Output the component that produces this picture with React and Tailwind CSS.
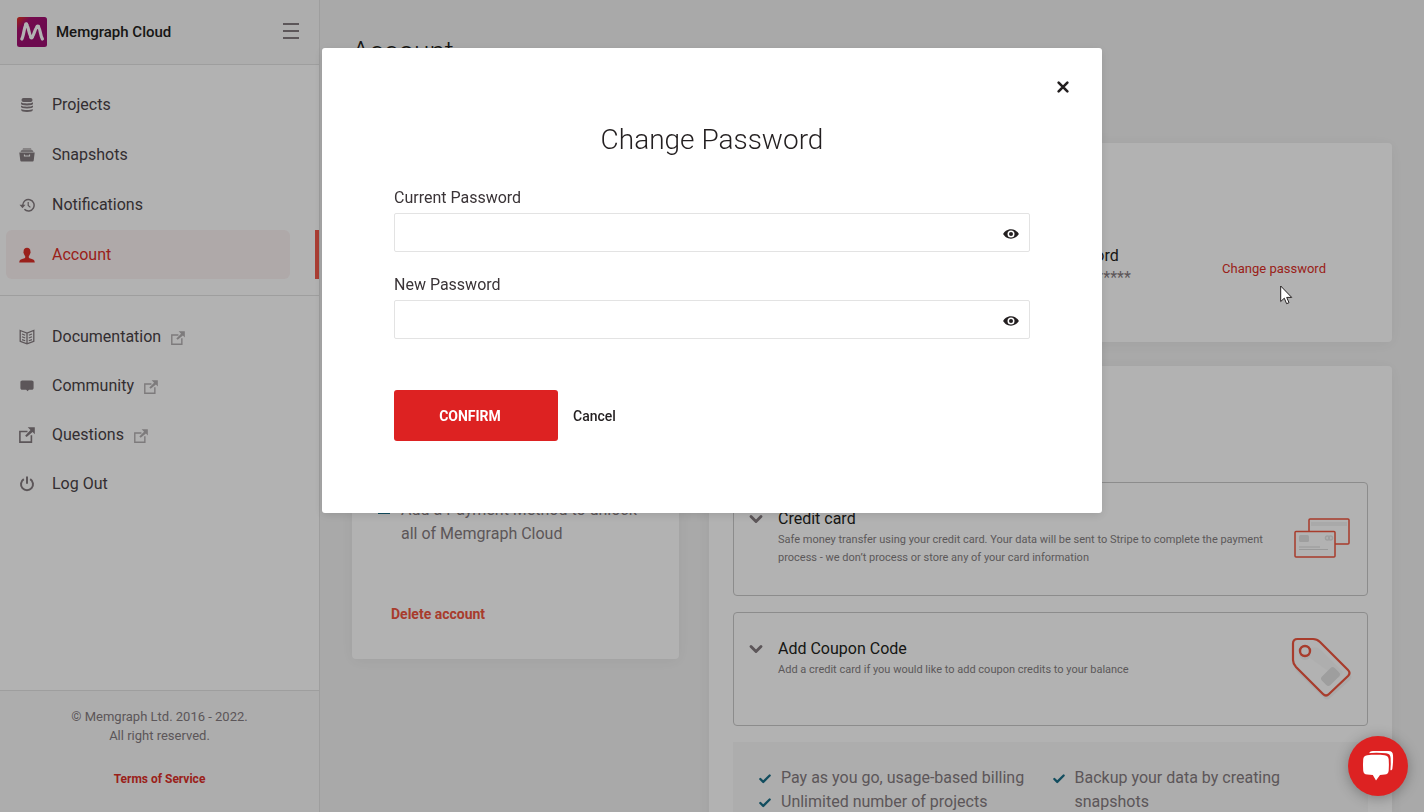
import React, { useState } from "react";
import { ChevronDown, Check } from "lucide-react";

const Icon = ({ children, size = 16, className = "" }) => (
  <svg
    width={size}
    height={size}
    viewBox="0 0 16 16"
    fill="currentColor"
    aria-hidden="true"
    className={className}
  >
    {children}
  </svg>
);

const ProjectsIcon = () => (
  <Icon>
    <rect x="2.500" y="1" width="11" height="4" rx="2" />
    <path d="M2 5.200c1 .8 3.400 1.200 6 1.200s5-.4 6-1.200v1.600c0 1-2.200 1.700-6 1.700s-6-.7-6-1.700z" />
    <path d="M2 8.600c1 .8 3.400 1.200 6 1.200s5-.4 6-1.200v1.200c0 1-2.200 1.700-6 1.700s-6-.7-6-1.700z" />
    <path d="M2.300 11.900c1 .7 3.200 1.100 5.700 1.100s4.700-.4 5.700-1.100v1.300c0 1-2.200 1.700-5.700 1.700s-5.700-.7-5.700-1.700z" />
  </Icon>
);

const SnapshotsIcon = () => (
  <Icon>
    <path d="M4 1.500h8l.6 1H3.400zM2.600 3.200h10.800l1.200 1.500H1.400z" />
    <path
      fillRule="evenodd"
      d="M.3 5.400h15.400l-1 8.200c-.1.600-.4.900-1 .9H2.300c-.6 0-.9-.3-1-.9zM4.900 7.400v2.200h6.200V7.400H10v1.100H6V7.400z"
    />
  </Icon>
);

const NotificationsIcon = () => (
  <Icon>
    <path
      d="M3.700 8.300A5.700 5.700 0 1 1 5.400 12.300"
      fill="none"
      stroke="currentColor"
      strokeWidth="1.500"
    />
    <path d="M.5 7.800h6l-3 3.400z" />
    <path
      d="M9.200 5v3.400l2.200 2"
      fill="none"
      stroke="currentColor"
      strokeWidth="1.200"
    />
  </Icon>
);

const AccountIcon = () => (
  <Icon>
    <path d="M8 .8c2.300 0 3.500 1.500 3.400 3.700.4.700.2 1.700-.3 2.200-.3 1.200-.8 2-1.300 2.500v1.300c.2.700 1 .9 2.300 1.300 2 .6 3.500 1 3.700 3.700H.2c.2-2.700 1.700-3.100 3.700-3.700 1.300-.4 2.100-.6 2.300-1.300V9.200c-.5-.5-1-1.300-1.300-2.500-.5-.5-.7-1.500-.3-2.200C4.500 2.300 5.700.8 8 .8z" />
  </Icon>
);

const DocumentationIcon = () => (
  <Icon>
    <path
      d="M1.200 1.500 8 4l6.800-2.500v10.800L8 14.800l-6.800-2.500zM8 4v10.800"
      fill="none"
      stroke="currentColor"
      strokeWidth="1.300"
    />
    <path
      d="M3 5l3.200 1.200M3 7.800 6.200 9M3 10.600l3.200 1.200M13 5 9.800 6.200M13 7.800 9.800 9M13 10.600l-3.200 1.200"
      fill="none"
      stroke="currentColor"
      strokeWidth="1.200"
    />
  </Icon>
);

const CommunityIcon = () => (
  <Icon>
    <path d="M3.300 2.500h9.400c1.200 0 1.900.7 1.900 1.800v5.600c0 1.200-.7 1.800-1.900 1.800H10L8.500 13.300l-1.300-1.600H3.300c-1.200 0-1.900-.6-1.900-1.800V4.300c0-1.100.7-1.800 1.900-1.800z" />
  </Icon>
);

const ExternalIcon = ({ size, className }) => (
  <Icon size={size} className={className}>
    <path
      d="M8.500 4.500H.9v10.600h11.500V8.200"
      fill="none"
      stroke="currentColor"
      strokeWidth="1.600"
    />
    <path d="M8.700.2h7.100v7.100l-2.200-2.200-6 5-1.500-1.400 5.400-5.700z" />
  </Icon>
);

const LogOutIcon = () => (
  <Icon>
    <path
      d="M4.800 3.200a6 6 0 1 0 6.400 0"
      fill="none"
      stroke="currentColor"
      strokeWidth="2"
    />
    <path d="M7 .5h2v7.300H7z" />
  </Icon>
);

const EyeIcon = () => (
  <Icon>
    <path
      fillRule="evenodd"
      d="M8 3.300c4 0 6.700 2.600 7.900 4.700-1.200 2.100-3.900 4.700-7.900 4.700S1.300 10.100.1 8C1.300 5.900 4 3.300 8 3.300zM8 4.500a3.500 3.500 0 1 0 0 7 3.500 3.500 0 0 0 0-7z"
    />
    <circle cx="8" cy="8" r="2" />
  </Icon>
);

const Logo = () => (
  <svg width="30" height="30" viewBox="0 0 30 30" aria-hidden="true">
    <defs>
      <linearGradient id="logo" x1="0" y1="0" x2="0.6" y2="0.6">
        <stop offset="0" stopColor="#e5361b" />
        <stop offset="0.400" stopColor="#a8106f" />
        <stop offset="1" stopColor="#9c0f72" />
      </linearGradient>
    </defs>
    <rect width="30" height="30" rx="2.500" fill="url(#logo)" />
    <path
      d="M4.800 22C6.800 19 7.500 7.200 9.300 7.200c1.900 0 3 13.300 5.200 13.300 2.200 0 3.700-11 6.200-11 2.600 0 2.300 9 4.700 12.500"
      fill="none"
      stroke="#fff"
      strokeWidth="3.200"
      strokeLinecap="round"
      strokeLinejoin="round"
    />
    <circle cx="9.200" cy="7.300" r="2.100" fill="#fff" />
    <circle cx="20.800" cy="9.800" r="2.400" fill="#fff" />
    <circle cx="14.500" cy="20.300" r="2.200" fill="#fff" />
  </svg>
);

const CardsDrawing = () => (
  <svg width="60" height="44" viewBox="0 0 60 44" aria-hidden="true">
    <rect x="16" y="2" width="40" height="25" rx="1" fill="#fff" stroke="#f1563f" strokeWidth="1.500" />
    <path d="M18 5h36v4H18z" fill="#f2f2f2" />
    <rect x="2" y="14.500" width="40" height="25.500" rx="1" fill="#fff" stroke="#f1563f" strokeWidth="1.500" />
    <rect x="6" y="18" width="10" height="7" rx="1.500" fill="#e3e3e3" />
    <circle cx="34.500" cy="21" r="2" fill="none" stroke="#e3e3e3" strokeWidth="1.500" />
    <circle cx="37.500" cy="21" r="2" fill="none" stroke="#e3e3e3" strokeWidth="1.500" />
    <path d="M6 30h21" stroke="#ececec" strokeWidth="2" />
    <path d="M6 32.500h29" stroke="#dcdcdc" strokeWidth="1" />
  </svg>
);

const TagDrawing = () => (
  <svg width="62" height="66" viewBox="0 0 62 66" aria-hidden="true">
    <path
      d="M8 8h18c3 0 5 1 7 3l26 27c2 2 2 4 0 6L39 62c-2 2-4 2-6 0L7 37c-2-2-3-4-3-7V13z"
      fill="#f5f5f5"
    />
    <path
      d="M6.500 3H22c3 0 5 1 7 3l28 28c2 2 2 4 0 6L38 58c-2 2-4 2-6 0L5 31c-1.800-2-3-4-3-7V7.500C2 4.500 3.500 3 6.500 3z"
      fill="#fff"
      stroke="#f1563f"
      strokeWidth="2.200"
    />
    <path d="M19 12c6-2 9 0 12 3l21 21c-1 2-3 5-5 6L19 22z" fill="#fafafa" />
    <circle cx="14" cy="18.500" r="5.500" fill="#f4f4f4" />
    <rect x="30.500" y="34.500" width="18" height="12" rx="3" fill="#e3e3e3" transform="rotate(-45 39.500 40.500)" />
    <circle cx="14" cy="15" r="5" fill="#fff" stroke="#f1563f" strokeWidth="2.400" />
  </svg>
);

const mainLinks = [
  { label: "Projects", icon: ProjectsIcon },
  { label: "Snapshots", icon: SnapshotsIcon },
  { label: "Notifications", icon: NotificationsIcon },
  { label: "Account", icon: AccountIcon, active: true },
];

const helpLinks = [
  { label: "Documentation", icon: DocumentationIcon, external: true },
  { label: "Community", icon: CommunityIcon, external: true },
  { label: "Questions", icon: ExternalIcon, external: true },
  { label: "Log Out", icon: LogOutIcon },
];

const paymentMethods = [
  {
    title: "Credit card",
    text: "Safe money transfer using your credit card. Your data will be sent to Stripe to complete the payment process - we don’t process or store any of your card information",
    drawing: CardsDrawing,
  },
  {
    title: "Add Coupon Code",
    text: "Add a credit card if you would like to add coupon credits to your balance",
    drawing: TagDrawing,
  },
];

const benefits = [
  ["Pay as you go, usage-based billing", "Unlimited number of projects"],
  ["Backup your data by creating snapshots"],
];

const NavItem = ({ label, icon: ItemIcon, active, external }) => (
  <li className="flex justify-between">
    <a
      href="#"
      className={
        active
          ? "ml-1.5 mr-[25px] flex h-[49px] grow items-center rounded-md bg-[#fbf2f2] pl-[13px] text-[#dd2f28]"
          : "ml-1.5 mr-[29px] flex h-[49px] grow items-center rounded-md pl-[13px] text-[#4a4347]"
      }
    >
      <span className={active ? "mr-[17px] text-[#dd2f28]" : "mr-[17px] text-[#857c80]"}>
        <ItemIcon />
      </span>
      {label}
      {external && (
        <ExternalIcon size={14} className="ml-2.5 mt-0.5 text-[#b4b0b2]" />
      )}
    </a>
    {active && <span className="w-1 bg-[#f4594a]" />}
  </li>
);

const Sidebar = () => (
  <aside className="flex w-80 shrink-0 flex-col border-r border-[#e3e3e3] bg-white">
    <div className="flex h-[65px] items-center border-b border-[#e3e3e3] bg-[#f8f8f8] pl-[17px] pr-5">
      <Logo />
      <span className="ml-[9px] text-[15px] font-medium text-[#231f20]">
        Memgraph Cloud
      </span>
      <button
        type="button"
        aria-label="Toggle menu"
        className="mb-0.5 ml-auto flex w-4 flex-col gap-[5px]"
      >
        <span className="h-0.5 bg-[#857c80]" />
        <span className="h-0.5 bg-[#857c80]" />
        <span className="h-0.5 bg-[#857c80]" />
      </button>
    </div>

    <nav className="text-base">
      <ul className="flex flex-col gap-px border-b border-[#e3e3e3] pb-4 pt-[15px]">
        {mainLinks.map((item) => (
          <NavItem key={item.label} {...item} />
        ))}
      </ul>
      <ul className="pt-4">
        {helpLinks.map((item) => (
          <NavItem key={item.label} {...item} />
        ))}
      </ul>
    </nav>

    <footer className="mt-auto h-[122px] border-t border-[#e3e3e3] bg-[#f8f8f8] pt-4 text-center text-[13px] leading-[19px] text-[#857c80]">
      <p>© Memgraph Ltd. 2016 - 2022.</p>
      <p>All right reserved.</p>
      <a
        href="#"
        className="mt-6 inline-block text-xs font-bold leading-5 text-[#dd2f28]"
      >
        Terms of Service
      </a>
    </footer>
  </aside>
);

const PaymentMethod = ({ title, text, drawing: Drawing }) => (
  <section className="flex h-[114px] rounded-sm border border-[#c9c9c9] pl-4 pr-3.5 pt-6">
    <button
      type="button"
      aria-label={`Expand ${title}`}
      className="mr-4 flex h-6 w-3 items-center justify-center text-[#857c80]"
    >
      <ChevronDown size={20} strokeWidth={3.5} className="shrink-0" />
    </button>
    <div className="w-[500px]">
      <h3 className="text-base text-[#231f20]">{title}</h3>
      <p className="text-[11px] leading-[18px] text-[#857f82]">{text}</p>
    </div>
    <div className="ml-auto flex h-16 items-center">
      <Drawing />
    </div>
  </section>
);

const AccountPage = ({ onChangePassword }) => (
  <main className="grow px-8 pt-8">
    <h1 className="text-[28px] font-light leading-10 text-[#231f20]">
      Account
    </h1>

    <section className="mt-[71px] flex h-[199px] items-start justify-end rounded bg-white pr-[66px] pt-[101px] shadow-[0_2px_16px_rgba(0,0,0,0.06)]">
      <div className="w-[174px]">
        <h2 className="text-base text-[#231f20]">Password</h2>
        <p className="text-base leading-5 text-[#857c80]">************</p>
      </div>
      <button
        type="button"
        onClick={onChangePassword}
        className="mt-[15px] text-[13px] leading-5 text-[#dd2f28]"
      >
        Change password
      </button>
    </section>

    <div className="mt-6 flex items-start gap-[30px]">
      <section className="w-[327px] shrink-0 rounded bg-white px-6 pb-[33px] pt-[132px] shadow-[0_2px_16px_rgba(0,0,0,0.06)]">
        <div className="flex">
          <Icon size={16} className="mr-[9px] mt-px shrink-0 text-[#1b6f88]">
            <path
              d="M2.750 2.750h10.500v11.500H2.750z"
              fill="none"
              stroke="currentColor"
              strokeWidth="1.500"
            />
          </Icon>
          <p className="text-base text-[#857c80]">
            Add a Payment Method to unlock all of Memgraph Cloud
          </p>
        </div>
        <button
          type="button"
          className="ml-[15px] mt-14 block text-sm font-bold leading-6 text-[#f1563f]"
        >
          Delete account
        </button>
      </section>

      <section className="grow rounded bg-white px-6 pb-8 pt-[116px] shadow-[0_2px_16px_rgba(0,0,0,0.06)]">
        <div className="flex flex-col gap-4">
          {paymentMethods.map((method) => (
            <PaymentMethod key={method.title} {...method} />
          ))}
          <div className="grid grid-cols-2 bg-[#f8f8f8] p-6">
            {benefits.map((column) => (
              <ul key={column[0]} className="text-base text-[#857c80]">
                {column.map((benefit) => (
                  <li key={benefit} className="flex">
                    <Check
                      size={14}
                      strokeWidth={4}
                      className="ml-px mr-[9px] mt-1.5 shrink-0 text-[#1b6f88]"
                    />
                    {benefit}
                  </li>
                ))}
              </ul>
            ))}
          </div>
        </div>
      </section>
    </div>
  </main>
);

const PasswordField = ({ id, label, className }) => {
  const [visible, setVisible] = useState(false);

  return (
    <div className={className}>
      <label htmlFor={id} className="block text-base text-[#3a3437]">
        {label}
      </label>
      <div className="mt-[3px] flex h-[39px] items-center rounded-xs border border-[#e3e3e3] pr-2.5">
        <input
          id={id}
          type={visible ? "text" : "password"}
          className="h-full grow px-3 text-base outline-none"
        />
        <button
          type="button"
          aria-label="Show password"
          onClick={() => setVisible(!visible)}
          className="mt-[3px] text-[#231f20]"
        >
          <EyeIcon />
        </button>
      </div>
    </div>
  );
};

const ChangePasswordModal = ({ onClose }) => (
  <div className="fixed inset-0 flex items-start justify-center bg-black/30 pt-12">
    <div
      role="dialog"
      aria-labelledby="modal-title"
      className="relative w-full max-w-[780px] rounded-[3px] bg-white p-[72px] shadow-[0_2px_10px_rgba(0,0,0,0.12)]"
    >
      <button
        type="button"
        aria-label="Close"
        onClick={onClose}
        className="absolute right-8 top-8 text-[#231f20]"
      >
        <Icon size={14}>
          <path
            d="M3 3l10 10M13 3 3 13"
            stroke="currentColor"
            strokeWidth="3"
            strokeLinecap="round"
          />
        </Icon>
      </button>

      <h2
        id="modal-title"
        className="text-center text-[28px] font-light leading-10 text-[#231f20]"
      >
        Change Password
      </h2>
      <form onSubmit={(e) => e.preventDefault()}>
        <PasswordField
          id="current-password"
          label="Current Password"
          className="mt-[26px]"
        />
        <PasswordField
          id="new-password"
          label="New Password"
          className="mt-[21px]"
        />
        <div className="mt-[51px] flex items-center gap-[15px]">
          <button
            type="submit"
            className="h-[51px] w-[164px] rounded-[3px] bg-[#dd2222] pr-3 text-sm font-bold text-white"
          >
            CONFIRM
          </button>
          <button
            type="button"
            onClick={onClose}
            className="text-sm font-medium text-[#231f20]"
          >
            Cancel
          </button>
        </div>
      </form>
    </div>
  </div>
);

const App = () => {
  const [showModal, setShowModal] = useState(true);

  return (
    <div className="flex h-screen overflow-hidden bg-[#f3f3f3] font-[Roboto,sans-serif]">
      <Sidebar />
      <AccountPage onChangePassword={() => setShowModal(true)} />

      {showModal && <ChangePasswordModal onClose={() => setShowModal(false)} />}

      {/* Mouse pointer */}
      <svg
        width="13"
        height="20"
        viewBox="0 0 13 20"
        aria-hidden="true"
        className="absolute left-[1280px] top-[285px]"
      >
        <path
          d="M.7 1v15.500l3.600-3.300 2.300 5.500 2.400-1-2.300-5.300h5z"
          fill="#fff"
          stroke="#231f20"
          strokeWidth="1"
        />
      </svg>

      <button
        type="button"
        aria-label="Open chat"
        className="fixed bottom-4 right-4 flex size-15 items-center justify-center rounded-full bg-[#dd2222] shadow-[0_2px_14px_rgba(0,0,0,0.3)]"
      >
        <svg width="32" height="32" viewBox="0 0 32 32" aria-hidden="true">
          <path
            d="M7 4.200C7.300 2 8.500 1.200 11 1.100c5-.3 11-.3 15.500 0 3 .2 4.300 1.300 4.500 4.200.3 4.500 0 9-.6 13.200-.1 1-.6 1.500-1.400 2"
            fill="#fff"
          />
          <path
            d="M5 3.300c6-.7 13-.7 19 0 3 .3 4.400 1.700 4.600 4.600.3 4 .2 8-.2 12-.3 3-1.700 4.700-4.600 5l-9.300 5.600-9.600-5.700"
            fill="#dd2222"
          />
          <path
            d="M5.200 5.200c5.500-.6 12-.6 17.500 0 2.500.3 3.800 1.600 4 4 .3 3.700.3 7.500 0 11.200-.2 2.500-1.500 3.800-4 4.100-1.700.2-3 .3-4.700.4L14 30.500 10.800 24.900c-1.900-.1-3.700-.2-5.600-.4-2.500-.3-3.800-1.600-4-4.100-.3-3.700-.3-7.500 0-11.200.2-2.400 1.500-3.700 4-4z"
            fill="#fff"
          />
        </svg>
      </button>
    </div>
  );
};

export default App;
